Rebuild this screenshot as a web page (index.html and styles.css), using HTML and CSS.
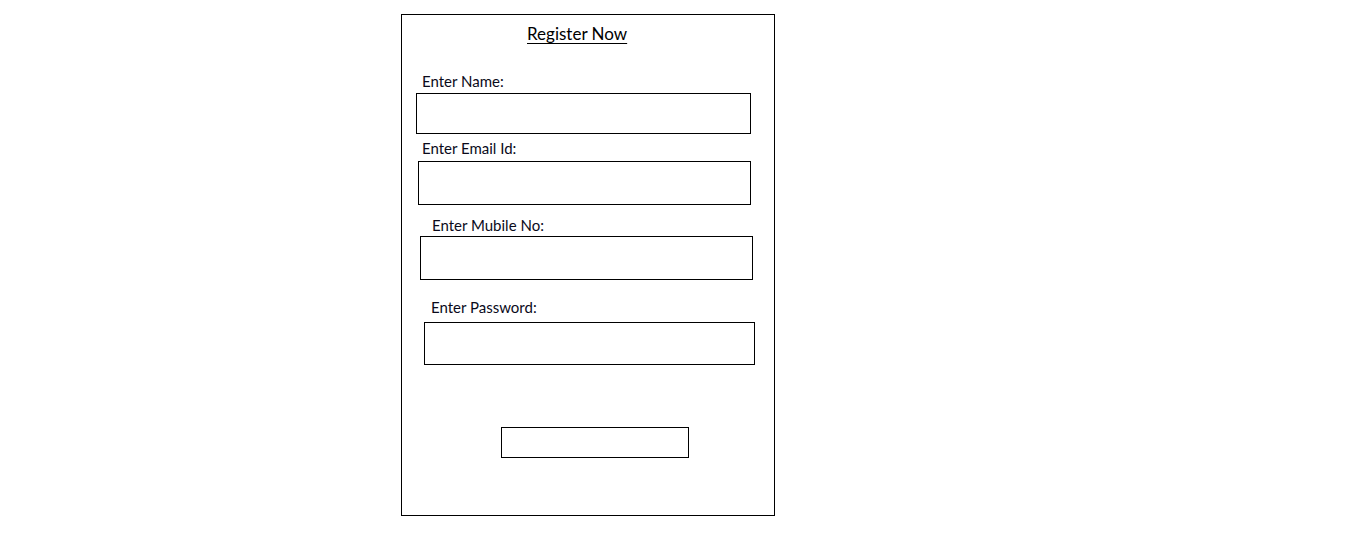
FILE: index.html
```html
<!DOCTYPE html>
<html lang="en">
<head>
<meta charset="utf-8">
<title>Register Now</title>
<link rel="stylesheet" href="styles.css">
</head>
<body>
<form class="card">
  <h1 class="title">Register Now</h1>
  <label class="label label-name" for="name">Enter Name:</label>
  <input class="field field-name" id="name" type="text">
  <label class="label label-email" for="email">Enter Email Id:</label>
  <input class="field field-email" id="email" type="email">
  <label class="label label-mobile" for="mobile">Enter Mubile No:</label>
  <input class="field field-mobile" id="mobile" type="tel">
  <label class="label label-pass" for="pass">Enter Password:</label>
  <input class="field field-pass" id="pass" type="password">
  <button class="submit" type="button"></button>
</form>
</body>
</html>
```
FILE: styles.css
```css
html, body {
  margin: 0;
  padding: 0;
  background: #fff;
}
body {
  font-family: Lato, "Liberation Sans", sans-serif;
  color: #000;
}
.card {
  box-sizing: border-box;
  width: 374px;
  height: 502px;
  margin: 14px 0 0 401px;
  border: 1px solid #000;
  display: flex;
  flex-direction: column;
  align-items: flex-start;
}
.title {
  margin: 9px 0 0 125px;
  font-size: 17px;
  font-weight: 400;
  line-height: 20px;
  text-decoration: underline;
  text-decoration-thickness: 1px;
  text-underline-offset: 3px;
}
.label {
  display: block;
  font-size: 15px;
  line-height: 17px;
  color: #0a0a1a;
}
.field {
  box-sizing: border-box;
  display: block;
  border: 1px solid #000;
  border-radius: 0;
  padding: 0;
  background: #fff;
  outline: none;
}
.label-name { margin: 29px 0 0 20px; }
.field-name { margin: 3px 0 0 14px; width: 335px; height: 41px; }
.label-email { margin: 6px 0 0 20px; }
.field-email { margin: 4px 0 0 16px; width: 333px; height: 44px; }
.label-mobile { margin: 12px 0 0 30px; }
.field-mobile { margin: 2px 0 0 18px; width: 333px; height: 44px; }
.label-pass { margin: 19px 0 0 29px; }
.field-pass { margin: 6px 0 0 22px; width: 331px; height: 43px; }
.submit {
  box-sizing: border-box;
  margin: 62px 0 0 99px;
  width: 188px;
  height: 31px;
  border: 1px solid #000;
  border-radius: 0;
  background: #fff;
  padding: 0;
}
```
